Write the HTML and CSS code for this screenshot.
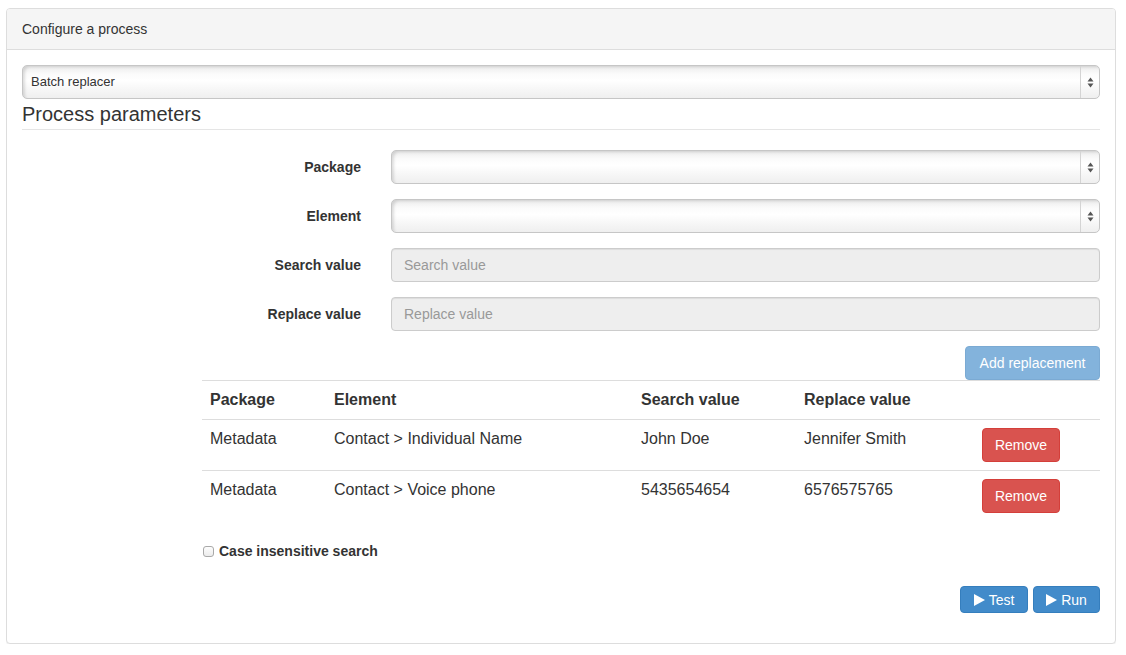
FILE: index.html
```html
<!DOCTYPE html>
<html>
<head>
<meta charset="utf-8">
<title>Configure a process</title>
<link rel="stylesheet" href="styles.css">
</head>
<body>
<div class="panel">
  <div class="panel-heading">Configure a process</div>
  <div class="panel-body">
    <div class="select">
      <span class="select-text">Batch replacer</span>
      <span class="select-arrows"><svg width="7" height="11" viewBox="0 0 7 11"><polygon points="3.5,0.5 6.5,4.5 0.5,4.5" fill="#555"/><polygon points="0.5,6.5 6.5,6.5 3.5,10.5" fill="#555"/></svg></span>
    </div>
    <div class="legend">Process parameters</div>

    <div class="form-row">
      <label class="form-label">Package</label>
      <div class="select">
        <span class="select-text"></span>
        <span class="select-arrows"><svg width="7" height="11" viewBox="0 0 7 11"><polygon points="3.5,0.5 6.5,4.5 0.5,4.5" fill="#555"/><polygon points="0.5,6.5 6.5,6.5 3.5,10.5" fill="#555"/></svg></span>
      </div>
    </div>
    <div class="form-row">
      <label class="form-label">Element</label>
      <div class="select">
        <span class="select-text"></span>
        <span class="select-arrows"><svg width="7" height="11" viewBox="0 0 7 11"><polygon points="3.5,0.5 6.5,4.5 0.5,4.5" fill="#555"/><polygon points="0.5,6.5 6.5,6.5 3.5,10.5" fill="#555"/></svg></span>
      </div>
    </div>
    <div class="form-row">
      <label class="form-label">Search value</label>
      <input class="input" type="text" placeholder="Search value" readonly>
    </div>
    <div class="form-row">
      <label class="form-label">Replace value</label>
      <input class="input" type="text" placeholder="Replace value" readonly>
    </div>

    <div class="add-row">
      <button class="btn btn-primary btn-disabled" type="button">Add replacement</button>
    </div>

    <table class="table">
      <colgroup>
        <col class="c1"><col class="c2"><col class="c3"><col class="c4"><col class="c5">
      </colgroup>
      <thead>
        <tr><th>Package</th><th>Element</th><th>Search value</th><th>Replace value</th><th></th></tr>
      </thead>
      <tbody>
        <tr>
          <td>Metadata</td><td>Contact &gt; Individual Name</td><td>John Doe</td><td>Jennifer Smith</td>
          <td><button class="btn btn-danger" type="button">Remove</button></td>
        </tr>
        <tr>
          <td>Metadata</td><td>Contact &gt; Voice phone</td><td>5435654654</td><td>6576575765</td>
          <td><button class="btn btn-danger" type="button">Remove</button></td>
        </tr>
      </tbody>
    </table>

    <div class="checkbox-row">
      <label class="checkbox-label"><span class="checkbox"></span>Case insensitive search</label>
    </div>

    <div class="actions">
      <button class="btn btn-primary btn-small" type="button"><svg class="play" width="11" height="12" viewBox="0 0 11 12"><polygon points="0,0 11,6 0,12" fill="#fff"/></svg>Test</button>
      <button class="btn btn-primary btn-small" type="button"><svg class="play" width="11" height="12" viewBox="0 0 11 12"><polygon points="0,0 11,6 0,12" fill="#fff"/></svg>Run</button>
    </div>
  </div>
</div>
</body>
</html>
```

FILE: styles.css
```css
* { box-sizing: border-box; }

body {
  margin: 8px 10px 0 6px;
  font-family: "Liberation Sans", Arial, Helvetica, sans-serif;
  font-size: 14px;
  line-height: 20px;
  color: #333;
  background: #fff;
}

.panel {
  width: 1110px;
  border: 1px solid #ddd;
  border-radius: 4px;
  box-shadow: 0 1px 1px rgba(0, 0, 0, 0.06);
  background: #fff;
}

.panel-heading {
  padding: 10px 15px;
  background: #f5f5f5;
  border-bottom: 1px solid #ddd;
  border-radius: 3px 3px 0 0;
  font-size: 14px;
  line-height: 20px;
  color: #333;
}

.panel-body {
  padding: 15px;
}

/* Mac style select */
.select {
  display: flex;
  height: 34px;
  border: 1px solid #c6c6c6;
  border-radius: 5px;
  background: linear-gradient(#ececec 0%, #fbfbfb 25%, #ffffff 45%, #f6f6f6 75%, #efefef 100%);
  box-shadow: inset 3px 2px 3px -1px rgba(0, 0, 0, 0.13);
  font-size: 13px;
  color: #333;
}

.select-text {
  flex: 1;
  padding: 0 8px;
  line-height: 32px;
}

.select-arrows {
  width: 19px;
  border-left: 1px solid #d4d4d4;
  display: flex;
  align-items: center;
  justify-content: center;
}

.legend {
  font-size: 20px;
  line-height: 30px;
  border-bottom: 1px solid #e5e5e5;
  margin-bottom: 20px;
  color: #333;
}

.form-row {
  display: grid;
  grid-template-columns: 339px 1fr;
  column-gap: 30px;
  margin-bottom: 15px;
}

.form-label {
  text-align: right;
  font-weight: bold;
  padding-top: 7px;
  line-height: 20px;
}

.input {
  display: block;
  width: 100%;
  height: 34px;
  padding: 6px 12px;
  border: 1px solid #ccc;
  border-radius: 4px;
  background: #eee;
  font-family: inherit;
  font-size: 14px;
  color: #555;
  box-shadow: inset 0 1px 1px rgba(0, 0, 0, 0.075);
  outline: none;
}

.input::placeholder { color: #999; }

.add-row {
  display: flex;
  justify-content: flex-end;
}

.btn {
  display: inline-flex;
  align-items: center;
  justify-content: center;
  height: 34px;
  padding: 0 12px;
  border: 1px solid transparent;
  border-radius: 4px;
  font-family: inherit;
  font-size: 14px;
  line-height: 20px;
  color: #fff;
  white-space: nowrap;
  cursor: pointer;
}

.btn-primary {
  background: #428bca;
  border-color: #357ebd;
}

.btn-disabled {
  opacity: 0.65;
  padding: 0 12px;
  min-width: 135px;
}

.btn-danger {
  background: #d9534f;
  border-color: #d43f3a;
  width: 78px;
}

.table {
  margin-left: 180px;
  width: 898px;
  border-collapse: collapse;
  border-top: 1px solid #ddd;
  margin-bottom: 20px;
  font-size: 16px;
  line-height: 22px;
  table-layout: fixed;
}

.c1 { width: 124px; }
.c2 { width: 307px; }
.c3 { width: 163px; }
.c4 { width: 178px; }
.c5 { width: 126px; }

.table th {
  text-align: left;
  font-weight: bold;
  padding: 8px;
  border-bottom: 1px solid #ddd;
}

.table td {
  padding: 8px;
  vertical-align: top;
  border-top: 1px solid #ddd;
}

.table tbody tr:first-child td { border-top: 0; }

.checkbox-row {
  margin-left: 180px;
}

.checkbox-label {
  display: flex;
  align-items: center;
  font-weight: bold;
  line-height: 20px;
}

.checkbox {
  width: 11px;
  height: 11px;
  margin: 1px 5px 0 1px;
  border: 1px solid #a9a9a9;
  border-radius: 3px;
  background: linear-gradient(#fdfdfd, #ececec);
}

.actions {
  display: flex;
  justify-content: flex-end;
  gap: 5px;
  margin-top: 25px;
  margin-bottom: 15px;
}

.btn-small {
  height: 27px;
  padding: 0 12px;
}

.btn-small:first-child { width: 68px; }
.btn-small:last-child { width: 67px; }

.play {
  margin-right: 4px;
}
```
